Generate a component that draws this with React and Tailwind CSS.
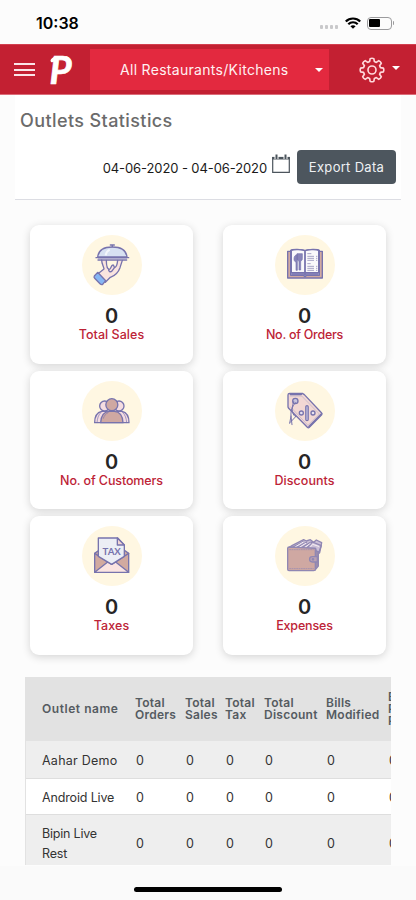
const stroke = { stroke: '#7773ad', strokeWidth: 4, strokeLinejoin: 'round', strokeLinecap: 'round' }

function Disc({ children }) {
  return (
    <svg viewBox="0 0 180 180" className="w-[60px] h-[60px]" fill="none">
      <circle cx="90" cy="90" r="90" fill="#fff7e2" />
      {children}
    </svg>
  )
}

function SalesIcon() {
  return (
    <Disc>
      <g {...stroke}>
        <path d="M59 75c0 12 5 17 7 27L47 117l23 25 15-15c14-5 24-15 29-29l7-22" fill="#fae4df" />
        <path d="M73 76c0 13 1 27 9 27 6 0 4-13 11-13 4 0 2 7 5 7 6 0 8-12 9-21" fill="#fff7e2" />
        <path d="M80 103c-1 5 4 9 9 6l9-12" />
        <path d="M37 123l10-11 24 25-9 11c-3 2-6 0-8-2l-16-16c-2-2-3-4-1-7z" fill="#86b6f4" />
        <path d="M47 66c2-19 18-30 44-30s42 11 44 30z" fill="#d8e1f2" />
        <path d="M85 30h12M91 30v5M42 68h98M48 75h86" />
      </g>
      <path d="M71 61c1-9 6-14 12-17" stroke="#f4f7fc" strokeWidth="6" />
      <path d="M48 71h87" stroke="#a9a5cf" strokeWidth="3" />
    </Disc>
  )
}

function OrdersIcon() {
  return (
    <Disc>
      <g {...stroke}>
        <path d="M38 49h104v80H38z" fill="#d2aaa0" />
        <path d="M47 46c3-4 35-4 43 1 8-5 40-5 43-1v75H95l-5 4-5-4H47z" fill="#b8b7dc" />
        <path d="M49 46c8-3 34-3 41 2v65H49zM90 48c7-5 33-5 41-2v67H90z" fill="#faf9fb" />
      </g>
      <path d="M57 72c0-8 4-13 10-13v47h-4V81c-4-1-6-4-6-9zM66 56h16v15c0 4-2 6-5 7v27h-5V78c-4-1-6-4-6-8z" fill="#8884b9" stroke="#7773ad" strokeWidth="2" />
      <path d="M97 56h12M97 64h20M97 70h20M97 76h20M97 86h10M97 94h20M97 100h20M97 106h20M123 64h4M123 70h4M123 76h4M123 94h4M123 100h4M123 106h4" stroke="#a7a4c5" strokeWidth="3" />
      <path d="M90 49v73M50 117h80" stroke="#7773ad" strokeWidth="4" />
    </Disc>
  )
}

function CustomersIcon() {
  return (
    <Disc>
      <g {...stroke}>
        <path d="M38 125c0-19 7-31 21-34h61c14 3 21 15 21 34z" fill="#f5dde1" />
        <circle cx="68" cy="75" r="15" fill="#f5dde1" />
        <circle cx="111" cy="75" r="15" fill="#f5dde1" />
        <path d="M57 94c-8 8-11 18-12 31M122 94c8 8 11 18 12 31" strokeWidth="2" />
        <path d="M56 125c1-22 11-33 26-34h15c15 1 25 12 26 34z" fill="#cfa8a2" />
        <circle cx="89.500" cy="71" r="18" fill="#cfa8a2" />
        <path d="M64 112c3-9 8-14 14-17" strokeWidth="2" />
      </g>
    </Disc>
  )
}

function DiscountIcon() {
  return (
    <Disc>
      <g {...stroke}>
        <path d="M39 42c0-3 2-5 5-5h38l6 4 52 55c2 2 2 3 0 5l-37 38c-2 2-4 2-6 0L41 82c-1-2-2-3-2-5z" fill="#f2d8d4" />
        <path d="M46 45h34l53 54-34 34-53-56" strokeWidth="2" stroke="#b9afc8" />
        <path d="M46 40h33M102 137l37-38" strokeWidth="5" />
        <circle cx="61" cy="60" r="8" fill="#c9c4dc" />
        <path d="M61 65c-10 14-14 22-13 40l-4 22M56 62c-9 24-3 42 6 45M48 105l3 26M62 107l-16 17" strokeWidth="3" />
        <rect x="92.500" y="74" width="7" height="45" rx="3.500" fill="#d9d7ec" />
        <circle cx="79" cy="96" r="6" fill="#e8e2ef" />
        <circle cx="114" cy="96" r="6" fill="#e8e2ef" />
      </g>
    </Disc>
  )
}

function TaxIcon() {
  return (
    <Disc>
      <g {...stroke}>
        <path d="M38 82l14-10h74l14 10v57H38z" fill="#d2aaa0" />
        <path d="M38 139l42-33h18l42 33z" fill="#fbe4e1" />
        <path d="M38 82l51 33 51-33" />
        <path d="M49 36h58l20 21v34l-38 24-40-24z" fill="#eceef5" />
        <path d="M106 36v21h21z" fill="#f2d6d5" />
      </g>
      <text x="89" y="88" textAnchor="middle" fontSize="29" fontWeight="700" fill="#7773ad" className="font-['Lato',sans-serif]">TAX</text>
    </Disc>
  )
}

function ExpensesIcon() {
  return (
    <Disc>
      <g {...stroke} stroke="#9087b3">
        <path d="M42 65l10-7 34-17 8 4 12-4 10 8 8-7 16 8-6 30-8 6-4-19z" fill="#cbbfd6" />
        <path d="M52 64l34-18M66 64l28-15M80 65l28-17M96 66l16-18 27 11-8 22" />
        <path d="M60 63l25-15M74 63l18-11M90 64l16-12M107 62l6-7 18 6" stroke="#f6eff3" strokeWidth="3" />
        <path d="M120 74l10 3v43l-10 12z" fill="#9c8dad" />
        <path d="M38 67c0-3 2-4 5-4l78 4v63c0 3-2 4-5 4H42c-3 0-4-2-4-4z" fill="#cfa8a2" />
        <path d="M44 71h71M44 128h71" strokeWidth="2" strokeDasharray="3 4" />
        <path d="M127 92h-15c-11 0-11 16 0 16h15z" fill="#bba1b2" />
        <circle cx="114" cy="100" r="2" />
      </g>
    </Disc>
  )
}

const stats = [
  { label: 'Total Sales', icon: SalesIcon, track: 'tracking-[0.03px]' },
  { label: 'No. of Orders', icon: OrdersIcon, track: 'tracking-[-0.25px]' },
  { label: 'No. of Customers', icon: CustomersIcon, track: 'tracking-[-0.12px]' },
  { label: 'Discounts', icon: DiscountIcon, track: 'tracking-[0.03px]' },
  { label: 'Taxes', icon: TaxIcon, track: 'tracking-[0.1px]' },
  { label: 'Expenses', icon: ExpensesIcon, track: 'tracking-[-0.15px]' },
]

const columns = [
  ['Total', 'Orders'],
  ['Total', 'Sales'],
  ['Total', 'Tax'],
  ['Total', 'Discount'],
  ['Bills', 'Modified'],
  ['Bills', 'Re-', 'Printed'],
]

const outlets = [
  { name: 'Aahar Demo', row: 'h-[38px] bg-[#eeeeee]', track: 'tracking-[0.25px]' },
  { name: 'Android Live', row: 'h-[36px] bg-white', track: 'tracking-[-0.15px]' },
  { name: 'Bipin Live Rest', row: 'h-[57px] bg-[#eeeeee]', track: 'tracking-[-0.2px]' },
]

function StatusBar() {
  return (
    <div className="h-[44px] shrink-0 flex items-center justify-between pl-[36px] pr-[22px] pt-[2px]">
      <span className="text-[16px] font-semibold text-black">10:38</span>
      <div className="flex items-center">
        <div className="flex gap-[2px] mt-[8px] mr-[7px]">
          {[0, 1, 2, 3].map((i) => (
            <span key={i} className="w-[3px] h-[4px] rounded-[1px] bg-[#c9c9cb]" />
          ))}
        </div>
        <svg viewBox="0 0 16 12" className="w-4 h-3 mr-[6px]" fill="none" stroke="#000" strokeWidth="2.200">
          <path d="M.8 4.500c4-4 10.400-4 14.400 0M3.300 7.200c2.600-2.600 6.800-2.600 9.400 0" />
          <path d="M5.400 9.200c1.400-1.400 3.800-1.400 5.200 0L8 11.800z" fill="#000" stroke="none" />
        </svg>
        <div className="w-[25px] h-[13px] rounded-[4px] border border-[#9b9b9d] p-[1.500px] flex">
          <span className="w-[11px] h-[8px] rounded-[1px] bg-black" />
        </div>
        <span className="w-[1.500px] h-[4px] ml-[1px] rounded-r bg-[#9b9b9d]" />
      </div>
    </div>
  )
}

function Header() {
  return (
    <header className="h-[51px] shrink-0 flex items-center bg-[#c32032] border-t border-b border-t-[#d2404f] border-b-[#dc6c79]">
      <div className="ml-[14px] w-[21px] flex flex-col gap-[3.500px]">
        <span className="h-[2px] bg-[#fbe5e8]" />
        <span className="h-[2px] bg-[#fbe5e8]" />
        <span className="h-[2px] bg-[#fbe5e8]" />
      </div>
      <svg viewBox="0 0 24 34" className="w-[24px] h-[34px] ml-[14px] overflow-visible">
        <text
          x="0.500"
          y="30.500"
          fontSize="38"
          fontWeight="700"
          fontStyle="italic"
          fill="#fff"
          stroke="#fff"
          strokeWidth="0.700"
          strokeLinejoin="round"
          className="font-['Lato',sans-serif]"
        >
          P
        </text>
        <ellipse cx="4.500" cy="6.500" rx="3.400" ry="1.900" transform="rotate(-40 4.500 6.500)" fill="#fff" />
      </svg>
      <div className="ml-[17px] w-[239px] h-[41px] bg-[#e3293f] flex items-center pl-[30px] pr-[6px]">
        <span className="flex-1 whitespace-nowrap text-[14px] text-[#fff1f2] tracking-[0.3px]">All Restaurants/Kitchens</span>
        <span className="border-x-4 border-t-4 border-x-transparent border-t-white" />
      </div>
      <svg viewBox="0 0 24 24" className="w-[26px] h-[26px] ml-[30px]" fill="none" stroke="#ffd9dc" strokeWidth="1.500" strokeLinejoin="round">
        <path d="M10.300 1.500q1.700-.8 3.400 0l.5 2.700 1.800.8 2.300-1.600q1.700.6 2.300 2.300L19 8l.8 1.800 2.700.5q.8 1.700 0 3.400l-2.700.5L19 16l1.600 2.300q-.6 1.700-2.300 2.300L16 19l-1.800.8-.5 2.700q-1.700.8-3.400 0l-.5-2.700L8 19l-2.300 1.600q-1.700-.6-2.300-2.300L5 16l-.8-1.800-2.700-.5q-.8-1.700 0-3.400l2.700-.5L5 8 3.400 5.700q.6-1.700 2.300-2.300L8 5l1.800-.8z" />
        <circle cx="12" cy="12" r="3.700" />
      </svg>
      <span className="ml-[7px] mb-[4px] border-x-4 border-t-4 border-x-transparent border-t-white" />
    </header>
  )
}

function CalendarIcon() {
  return (
    <svg viewBox="0 0 18 19" className="w-[18px] h-[19px]" fill="none" stroke="#4c555d">
      <path d="M.7 3.500h16.600v14.800H.7z" strokeWidth="1.200" />
      <path d="M.2 4.200h17.600" strokeWidth="2.600" />
      <path d="M4.500 0v5M13.500 0v5" stroke="#fff" strokeWidth="4" />
      <path d="M4.500 .5v4.500M13.500 .5v4.500" strokeWidth="2" />
    </svg>
  )
}

export default function App() {
  return (
    <div className="w-[416px] h-[900px] overflow-hidden flex flex-col bg-[#fcfcfc] font-['Inter',sans-serif]">
      <StatusBar />
      <Header />

      <section className="mx-[15px] h-[105px] w-[386px] shrink-0 bg-white border-b border-[#dcdde3]">
        <h1 className="pt-[12px] pl-[5px] text-[18px] leading-[27px] font-medium text-[#6b6b6b] tracking-[0.4px]">Outlets Statistics</h1>
        <div className="mt-[16px] flex items-start justify-end pr-[5px]">
          <span className="mt-[8px] mr-[5px] text-[13px] leading-[20px] text-[#1a1a1a] whitespace-nowrap tracking-[-0.1px]">04-06-2020 - 04-06-2020</span>
          <span className="mt-[4px] mr-[7px]">
            <CalendarIcon />
          </span>
          <button className="w-[99px] h-[34px] rounded-[4px] bg-[#4d565e] pt-[1px] text-[13px] text-[#eef1f3] whitespace-nowrap tracking-[0.3px]">Export Data</button>
        </div>
      </section>

      <section className="mt-[25px] mx-[30px] shrink-0 grid grid-cols-[163px_163px] gap-x-[30px] gap-y-[7px]">
        {stats.map(({ label, icon: Icon, track }) => (
          <div key={label} className="h-[138.600px] rounded-[9px] bg-white shadow-[0_2px_8px_rgba(0,0,0,0.16)] flex flex-col items-center pt-[10px]">
            <Icon />
            <span className="mt-[10px] text-[20px] leading-[22px] font-semibold text-[#262626]">0</span>
            <span className={`text-[12.500px] leading-[15px] font-medium text-[#bd2336] ${track}`}>{label}</span>
          </div>
        ))}
      </section>

      <div className="mt-[22px] ml-[25px] w-[366px] h-[188px] shrink-0 overflow-hidden border-l border-[#e2e2e2]">
        <table className="w-[416px] table-fixed border-collapse text-left text-[12.500px] text-[#333]">
          <colgroup>
            <col className="w-[109px]" />
            <col className="w-[50px]" />
            <col className="w-[40px]" />
            <col className="w-[39px]" />
            <col className="w-[62px]" />
            <col className="w-[62px]" />
            <col className="w-[54px]" />
          </colgroup>
          <thead>
            <tr className="h-[64px] bg-[#e2e2e2] text-[12px] leading-[12px] text-[#555b61]">
              <th className="p-0 pl-[16px] font-semibold whitespace-nowrap tracking-[0.55px]">Outlet name</th>
              {columns.map((lines) => (
                <th key={lines.join()} className="p-0 pt-px font-semibold tracking-[0.25px]">
                  {lines.map((line) => (
                    <div key={line} className="whitespace-nowrap">{line}</div>
                  ))}
                </th>
              ))}
            </tr>
          </thead>
          <tbody>
            {outlets.map(({ name, row, track }) => (
              <tr key={name} className={`border-b border-[#dedede] leading-[20px] ${row}`}>
                <td className={`p-0 pt-[2px] pl-[16px] pr-[14px] ${track}`}>{name}</td>
                {columns.map((lines) => (
                  <td key={lines.join()} className="p-0 pt-[2px] pl-[1px]">0</td>
                ))}
              </tr>
            ))}
          </tbody>
        </table>
      </div>

      <div className="mt-[1px] flex-1 bg-[#fafafa] flex justify-center pt-[21px]">
        <span className="w-[148px] h-[5px] rounded-full bg-black" />
      </div>
    </div>
  )
}
